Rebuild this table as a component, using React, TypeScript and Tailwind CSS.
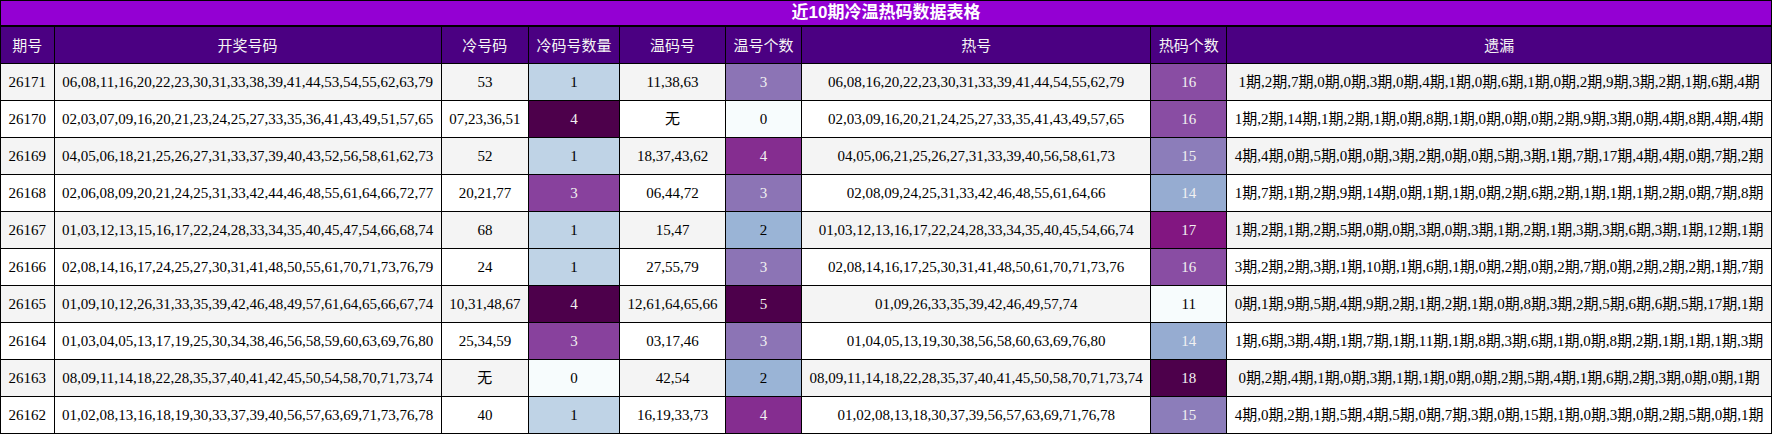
const rows: [string, string, string, number, string, number, string, number, string][] = [
  ["26171", "06,08,11,16,20,22,23,30,31,33,38,39,41,44,53,54,55,62,63,79", "53", 1, "11,38,63", 3, "06,08,16,20,22,23,30,31,33,39,41,44,54,55,62,79", 16, "1期,2期,7期,0期,0期,3期,0期,4期,1期,0期,6期,1期,0期,2期,9期,3期,2期,1期,6期,4期"],
  ["26170", "02,03,07,09,16,20,21,23,24,25,27,33,35,36,41,43,49,51,57,65", "07,23,36,51", 4, "无", 0, "02,03,09,16,20,21,24,25,27,33,35,41,43,49,57,65", 16, "1期,2期,14期,1期,2期,1期,0期,8期,1期,0期,0期,0期,2期,9期,3期,0期,4期,8期,4期,4期"],
  ["26169", "04,05,06,18,21,25,26,27,31,33,37,39,40,43,52,56,58,61,62,73", "52", 1, "18,37,43,62", 4, "04,05,06,21,25,26,27,31,33,39,40,56,58,61,73", 15, "4期,4期,0期,5期,0期,0期,3期,2期,0期,0期,5期,3期,1期,7期,17期,4期,4期,0期,7期,2期"],
  ["26168", "02,06,08,09,20,21,24,25,31,33,42,44,46,48,55,61,64,66,72,77", "20,21,77", 3, "06,44,72", 3, "02,08,09,24,25,31,33,42,46,48,55,61,64,66", 14, "1期,7期,1期,2期,9期,14期,0期,1期,1期,0期,2期,6期,2期,1期,1期,1期,2期,0期,7期,8期"],
  ["26167", "01,03,12,13,15,16,17,22,24,28,33,34,35,40,45,47,54,66,68,74", "68", 1, "15,47", 2, "01,03,12,13,16,17,22,24,28,33,34,35,40,45,54,66,74", 17, "1期,2期,1期,2期,5期,0期,0期,3期,0期,3期,1期,2期,1期,3期,3期,6期,3期,1期,12期,1期"],
  ["26166", "02,08,14,16,17,24,25,27,30,31,41,48,50,55,61,70,71,73,76,79", "24", 1, "27,55,79", 3, "02,08,14,16,17,25,30,31,41,48,50,61,70,71,73,76", 16, "3期,2期,2期,3期,1期,10期,1期,6期,1期,0期,2期,0期,2期,7期,0期,2期,2期,2期,1期,7期"],
  ["26165", "01,09,10,12,26,31,33,35,39,42,46,48,49,57,61,64,65,66,67,74", "10,31,48,67", 4, "12,61,64,65,66", 5, "01,09,26,33,35,39,42,46,49,57,74", 11, "0期,1期,9期,5期,4期,9期,2期,1期,2期,1期,0期,8期,3期,2期,5期,6期,6期,5期,17期,1期"],
  ["26164", "01,03,04,05,13,17,19,25,30,34,38,46,56,58,59,60,63,69,76,80", "25,34,59", 3, "03,17,46", 3, "01,04,05,13,19,30,38,56,58,60,63,69,76,80", 14, "1期,6期,3期,4期,1期,7期,1期,11期,1期,8期,3期,6期,1期,0期,8期,2期,1期,1期,1期,3期"],
  ["26163", "08,09,11,14,18,22,28,35,37,40,41,42,45,50,54,58,70,71,73,74", "无", 0, "42,54", 2, "08,09,11,14,18,22,28,35,37,40,41,45,50,58,70,71,73,74", 18, "0期,2期,4期,1期,0期,3期,1期,1期,0期,0期,2期,5期,4期,1期,6期,2期,3期,0期,0期,1期"],
  ["26162", "01,02,08,13,16,18,19,30,33,37,39,40,56,57,63,69,71,73,76,78", "40", 1, "16,19,33,73", 4, "01,02,08,13,18,30,37,39,56,57,63,69,71,76,78", 15, "4期,0期,2期,1期,5期,4期,5期,0期,7期,3期,0期,15期,1期,0期,3期,0期,2期,5期,0期,1期"],
];

const headers = ["期号", "开奖号码", "冷号码", "冷码号数量", "温码号", "温号个数", "热号", "热码个数", "遗漏"];

// BuPu stops, like pandas background_gradient
const stops = [
  [247, 252, 253], [224, 236, 244], [191, 211, 230], [158, 188, 218],
  [140, 150, 198], [140, 107, 177], [136, 65, 157], [129, 15, 124], [77, 0, 75],
];

function bupu(v: number, min: number, max: number) {
  const t = max === min ? 0 : (v - min) / (max - min);
  const pos = t * 8;
  const i = Math.min(7, Math.floor(pos));
  const f = pos - i;
  const c = stops[i].map((a, k) => Math.round(a + (stops[i + 1][k] - a) * f));
  const lin = c.map((x) => {
    const s = x / 255;
    return s <= 0.03928 ? s / 12.92 : Math.pow((s + 0.055) / 1.055, 2.4);
  });
  const lum = 0.2126 * lin[0] + 0.7152 * lin[1] + 0.0722 * lin[2];
  return { bg: `rgb(${c[0]},${c[1]},${c[2]})`, fg: lum < 0.408 ? "#f1f1f1" : "#000000" };
}

function range(col: 3 | 5 | 7) {
  const vals = rows.map((r) => r[col] as number);
  return [Math.min(...vals), Math.max(...vals)] as const;
}

const td = "border border-black px-[7.5px] py-2 text-center leading-[20px] whitespace-nowrap";

function HeatCell({ v, col }: { v: number; col: 3 | 5 | 7 }) {
  const [min, max] = range(col);
  const c = bupu(v, min, max);
  return (
    <td className={td} style={{ backgroundColor: c.bg, color: c.fg }}>
      {v}
    </td>
  );
}

export default function App() {
  return (
    <div className="w-[1772px] bg-white">
      <table className="w-full border-collapse font-['Liberation_Serif','Noto_Sans_CJK_SC',serif] text-[15px] text-black">
        <thead>
          <tr>
            <th
              colSpan={9}
              className="border border-b-2 border-black bg-[#9400d3] py-0 text-center font-['Liberation_Sans','Noto_Sans_CJK_SC',sans-serif] text-[17px] leading-[24px] font-bold text-white"
            >
              近10期冷温热码数据表格
            </th>
          </tr>
          <tr>
            {headers.map((h) => (
              <th
                key={h}
                className="border border-black bg-[#4b0082] px-[7.5px] py-2 text-center font-['Noto_Sans_CJK_SC',sans-serif] text-[15px] leading-[20px] font-normal whitespace-nowrap text-[#f5f5f5]"
              >
                {h}
              </th>
            ))}
          </tr>
        </thead>
        <tbody>
          {rows.map((r, i) => (
            <tr key={r[0]} className={i % 2 === 0 ? "bg-[#f4f4f4]" : "bg-white"}>
              <td className={td}>{r[0]}</td>
              <td className={td}>{r[1]}</td>
              <td className={td}>{r[2]}</td>
              <HeatCell v={r[3]} col={3} />
              <td className={td}>{r[4]}</td>
              <HeatCell v={r[5]} col={5} />
              <td className={td}>{r[6]}</td>
              <HeatCell v={r[7]} col={7} />
              <td className={td}>{r[8]}</td>
            </tr>
          ))}
        </tbody>
      </table>
    </div>
  );
}
